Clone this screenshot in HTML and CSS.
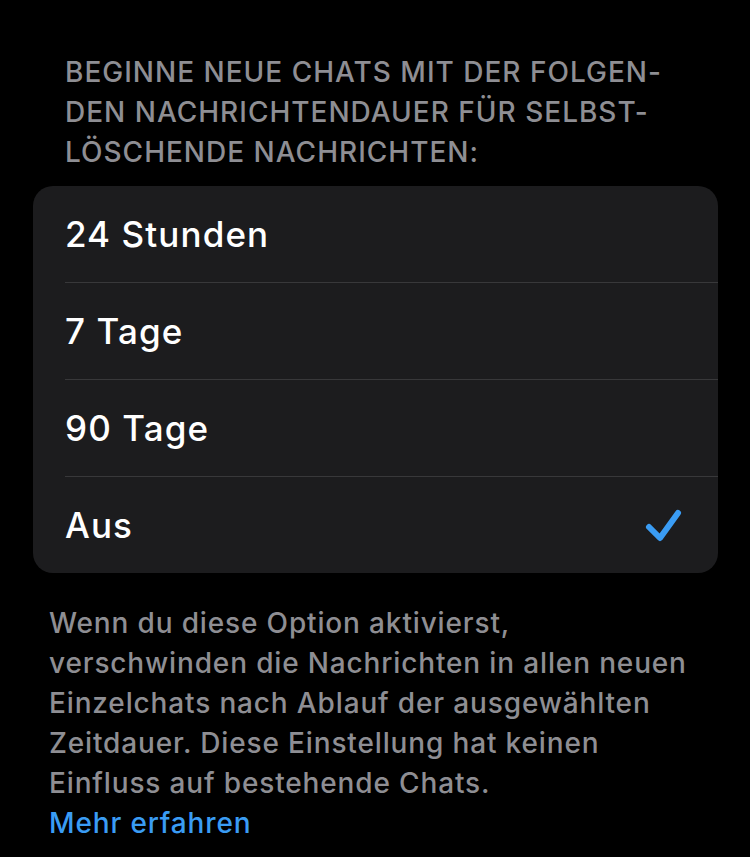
FILE: index.html
```html
<!DOCTYPE html>
<html lang="de">
<head>
    <meta charset="UTF-8">
    <meta name="viewport" content="width=device-width, initial-scale=1.0">
    <title>Standarddauer</title>
    <link rel="stylesheet" href="styles.css">
</head>
<body>

    <main class="settings">
        <h2 class="section-header">
            BEGINNE NEUE CHATS MIT DER FOLGEN-<br>
            DEN NACHRICHTENDAUER FÜR SELBST-<br>
            LÖSCHENDE NACHRICHTEN:
        </h2>

        <ul class="option-list">
            <li class="option">24 Stunden</li>
            <li class="option">7 Tage</li>
            <li class="option">90 Tage</li>
            <li class="option selected">
                Aus
                <svg class="check" width="40" height="36" viewBox="0 0 40 36">
                    <path d="M5 20 L16 31 L34 6" fill="none" stroke="#3a9cf4" stroke-width="6" stroke-linecap="round" stroke-linejoin="round"/>
                </svg>
            </li>
        </ul>

        <p class="section-footer">
            Wenn du diese Option aktivierst,<br>
            verschwinden die Nachrichten in allen neuen<br>
            Einzelchats nach Ablauf der ausgewählten<br>
            Zeitdauer. Diese Einstellung hat keinen<br>
            Einfluss auf bestehende Chats.<br>
            <a href="#" class="more-link">Mehr erfahren</a>
        </p>
    </main>

</body>
</html>
```

FILE: styles.css
```css
/* General */
body {
    margin: 0;
    padding: 0;
    background: #000;
    font-family: 'Inter', 'Roboto', sans-serif;
    width: 750px;
    height: 857px;
    overflow: hidden;
}

.settings {
    padding: 52px 32px 0 33px;
}

/* Header */
.section-header {
    margin: 0 0 14px 32px;
    font-size: 28px;
    font-weight: 500;
    line-height: 40px;
    color: #8e8e93;
    letter-spacing: 1px;
}

/* Options */
.option-list {
    list-style: none;
    margin: 0;
    padding: 0 0 0 32px;
    background: #1c1c1e;
    border-radius: 20px;
}

.option {
    display: flex;
    align-items: center;
    justify-content: space-between;
    height: 96px;
    padding-right: 34px;
    border-bottom: 1px solid #38383a;
    color: #fff;
    font-size: 35px;
    font-weight: 500;
    letter-spacing: 1.1px;
}

.option:last-child {
    border-bottom: none;
}

.check {
    display: block;
}

/* Footer */
.section-footer {
    margin: 30px 0 0 16px;
    font-size: 28px;
    font-weight: 500;
    line-height: 40px;
    color: #8e8e93;
    letter-spacing: 0.85px;
}

.more-link {
    color: #3a9cf4;
    text-decoration: none;
}
```
